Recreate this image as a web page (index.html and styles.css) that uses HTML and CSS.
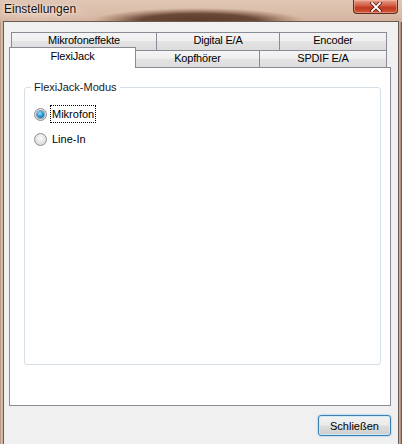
FILE: index.html
```html
<!DOCTYPE html>
<html>
<head>
<meta charset="utf-8">
<link rel="stylesheet" href="styles.css">
</head>
<body>
<div class="window">
  <div class="titlebar">
    <span class="title">Einstellungen</span>
    <button class="close" aria-label="Schließen">
      <svg width="14" height="10" viewBox="0 0 14 10">
        <path d="M3 1 L11 9 M11 1 L3 9" stroke="#5a1a10" stroke-width="3.4" stroke-linecap="square"/>
        <path d="M3 1 L11 9 M11 1 L3 9" stroke="#ffffff" stroke-width="1.8" stroke-linecap="square"/>
      </svg>
    </button>
  </div>
  <div class="client">
    <div class="tabs">
      <div class="tabrow back">
        <div class="tab w145">Mikrofoneffekte</div>
        <div class="tab w123">Digital E/A</div>
        <div class="tab w107">Encoder</div>
      </div>
      <div class="tabrow front">
        <div class="tab selected">FlexiJack</div>
        <div class="tab w123b">Kopfhörer</div>
        <div class="tab w127">SPDIF E/A</div>
      </div>
    </div>
    <div class="panel">
      <div class="group">
        <span class="legend">FlexiJack-Modus</span>
        <div class="radio checked"><span class="dot"></span><span class="label focus">Mikrofon</span></div>
        <div class="radio"><span class="dot"></span><span class="label">Line-In</span></div>
      </div>
    </div>
    <div class="footer">
      <button class="btn">Schließen</button>
    </div>
  </div>
</div>
</body>
</html>
```
FILE: styles.css
```css
* { box-sizing: border-box; }
html, body { margin: 0; padding: 0; }
body {
  width: 402px;
  height: 444px;
  overflow: hidden;
  font-family: "Liberation Sans", Arial, sans-serif;
  font-size: 11px;
  color: #000;
}
.window {
  width: 402px;
  height: 444px;
  display: flex;
  flex-direction: column;
  background:
    linear-gradient(90deg, #8a6a58 0, #e8cfc0 1px, #c9a896 2px, #d8bdaa 3px, #d8bdaa 398px, #b0907e 399px, #e4cabb 400px, #7a5a4a 401px);
}
.titlebar {
  height: 22px;
  flex: none;
  display: flex;
  align-items: flex-start;
  background:
    radial-gradient(ellipse 105px 13px at 198px 21px, rgba(92,60,42,1) 0, rgba(100,66,48,0.95) 55%, rgba(140,100,80,0.45) 82%, rgba(150,110,90,0) 100%),
    radial-gradient(ellipse 60px 10px at 40px 14px, rgba(235,210,195,0.6), rgba(235,210,195,0) 100%),
    linear-gradient(180deg, #dfc6b5 0, #dabda9 60%, #d2b19c 100%);
}
.title {
  font-family: "Liberation Sans", Arial, sans-serif;
  font-size: 12px;
  line-height: 14px;
  padding: 2px 0 0 4px;
  color: #111;
  text-shadow: 0 0 4px rgba(255,240,230,0.9), 0 0 2px rgba(255,240,230,0.9);
}
.close {
  margin-left: auto;
  margin-right: 4px;
  width: 45px;
  height: 14px;
  padding: 0;
  border: 1px solid #5d2c22;
  border-top: none;
  border-radius: 0 0 4px 4px;
  background: linear-gradient(180deg, #e8a08a 0, #d2624a 40%, #c0381f 60%, #d65a3a 100%);
  box-shadow: inset 0 0 0 1px rgba(255,200,180,0.45);
  display: flex;
  align-items: center;
  justify-content: center;
}
.client {
  flex: 1;
  margin: -1px 3px 0 3px;
  border: 1px solid #6a5a52;
  border-bottom: none;
  background: #f0f0f0;
  padding: 10px 7px 0 5px;
  display: flex;
  flex-direction: column;
}
.tabs {
  display: flex;
  flex-direction: column;
}
.tabrow {
  display: flex;
}
.tabrow.back {
  padding-left: 2px;
  height: 18px;
}
.tabrow.front {
  height: 17px;
}
.tab {
  border: 1px solid #898c95;
  border-right: none;
  background: linear-gradient(180deg, #f4f4f4 0, #f0f0f0 45%, #e4e4e4 50%, #dcdcdc 100%);
  text-align: center;
  white-space: nowrap;
  letter-spacing: -0.2px;
  color: #000;
}
.tab:last-child { border-right: 1px solid #898c95; }
.back .tab {
  height: 19px;
  line-height: 15px;
}
.front .tab {
  height: 17px;
  line-height: 15px;
  border-bottom: none;
}
.w145 { width: 145px; }
.w123 { width: 123px; }
.w107 { width: 108px; }
.w123b { width: 123px; }
.w127 { width: 128px; }
.tab.selected {
  width: 127px;
  height: 21px;
  margin-top: -3px;
  background: #fff;
  border-right: 1px solid #898c95;
  line-height: 17px;
  position: relative;
  z-index: 2;
}
.tab.selected + .tab { border-left: none; }
.panel {
  height: 339px;
  width: 382px;
  border: 1px solid #898c95;
  background: #fff;
  padding: 19px 9px 0 14px;
}
.group {
  height: 278px;
  border: 1px solid #d5dfe5;
  border-radius: 3px;
  position: relative;
  padding: 16px 0 0 9px;
}
.legend {
  position: absolute;
  top: -8px;
  left: 6px;
  background: #fff;
  padding: 0 3px;
  line-height: 14px;
  color: #1a1a1a;
}
.radio {
  display: flex;
  align-items: center;
  height: 20px;
  margin-bottom: 5px;
}
.dot {
  width: 13px;
  height: 13px;
  border-radius: 50%;
  border: 1px solid #8f8f8f;
  background: radial-gradient(circle at 50% 40%, #fafafa 0, #e6e6e6 50%, #cfcfcf 100%);
  flex: none;
  position: relative;
}
.radio.checked .dot::after {
  content: "";
  position: absolute;
  left: 2px;
  top: 2px;
  width: 7px;
  height: 7px;
  border-radius: 50%;
  background: radial-gradient(circle at 40% 35%, #9fe6ff 0, #2a9bd8 45%, #0b4f86 100%);
  box-shadow: 0 0 0 1px rgba(30,80,130,0.5);
}
.label {
  margin-left: 3px;
  padding: 1px 1px;
  line-height: 14px;
  border: 1px dotted transparent;
}
.label.focus {
  border-color: #000;
}
.footer {
  display: flex;
  justify-content: flex-end;
  padding-top: 9px;
}
.btn {
  width: 73px;
  height: 21px;
  margin-right: 0;
  font-family: "Liberation Sans", Arial, sans-serif;
  font-size: 11px;
  color: #000;
  border: 1px solid #3c7fb1;
  border-radius: 3px;
  background: linear-gradient(180deg, #f3f3f3 0, #ebebeb 48%, #dddddd 52%, #cfcfcf 100%);
  box-shadow: inset 0 0 0 1px rgba(200,235,255,0.9), 0 0 2px rgba(60,160,220,0.7);
  padding: 0;
}
```
